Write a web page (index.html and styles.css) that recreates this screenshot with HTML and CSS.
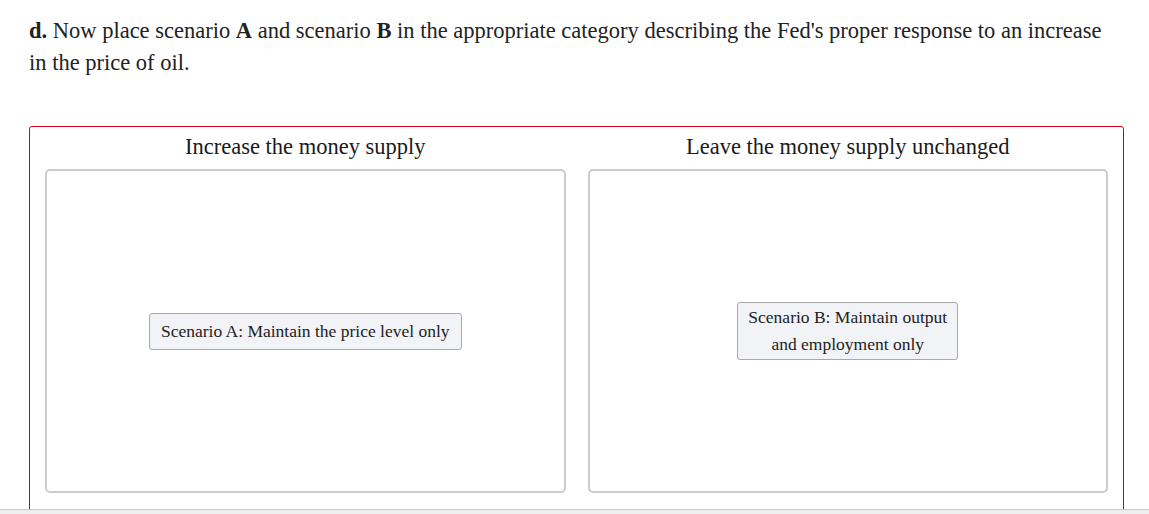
FILE: index.html
```html
<!DOCTYPE html>
<html>
<head>
<meta charset="utf-8">
<link rel="stylesheet" href="styles.css">
</head>
<body>
<div class="page">
  <p class="question"><b>d.</b> Now place scenario <b>A</b> and scenario <b>B</b> in the appropriate category describing the Fed's proper response to an increase in the price of oil.</p>
  <div class="sorter">
    <div class="column">
      <div class="col-title">Increase the money supply</div>
      <div class="drop">
        <div class="chip">Scenario A: Maintain the price level only</div>
      </div>
    </div>
    <div class="column">
      <div class="col-title">Leave the money supply unchanged</div>
      <div class="drop">
        <div class="chip chip-narrow">Scenario B: Maintain output and employment only</div>
      </div>
    </div>
  </div>
</div>
<div class="footer-bar"></div>
</body>
</html>
```

FILE: styles.css
```css
html, body {
  margin: 0;
  padding: 0;
  background: #fff;
  overflow: hidden;
  height: 514px;
}
body {
  font-family: "Liberation Serif", "Times New Roman", serif;
  color: #222;
  position: relative;
}
.page {
  padding: 0 25px 0 29px;
}
.question {
  margin: 0;
  padding-top: 15px;
  font-size: 22.5px;
  line-height: 32px;
  color: #222;
}
.question b {
  font-weight: bold;
}
.sorter {
  margin-top: 47px;
  border: 1px solid #d0021b;
  border-radius: 3px;
  padding: 0 15px 30px;
  display: grid;
  grid-template-columns: 1fr 1fr;
  column-gap: 22px;
}
.column {
  display: flex;
  flex-direction: column;
}
.col-title {
  text-align: center;
  font-size: 22.5px;
  line-height: 24px;
  padding: 8px 0 10px;
  color: #1a1a1a;
}
.drop {
  height: 324px;
  box-sizing: border-box;
  border: 2px solid #cccccc;
  border-radius: 5px;
  display: flex;
  align-items: center;
  justify-content: center;
}
.chip {
  box-sizing: border-box;
  min-height: 37px;
  display: flex;
  align-items: center;
  justify-content: center;
  text-align: center;
  padding: 1px 11px;
  font-size: 17.5px;
  line-height: 27px;
  color: #222;
  background: #f2f3f7;
  border: 1px solid #a8a8a8;
  border-radius: 3px;
}
.chip-narrow {
  width: 221px;
  padding: 1px 10px;
}
.footer-bar {
  position: absolute;
  left: 0;
  right: 0;
  top: 509px;
  height: 5px;
  border-top: 1px solid #c8c8c8;
  background: #efefef;
}
```
